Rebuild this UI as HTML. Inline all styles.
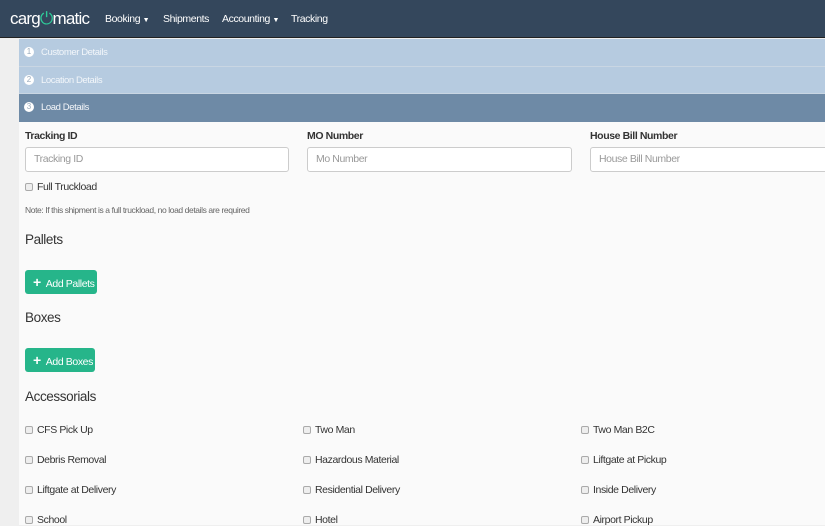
<!DOCTYPE html>
<html><head><style>
*{margin:0;padding:0;box-sizing:border-box}
body{width:825px;height:525px;overflow:hidden;background:#efefef;font-family:"Liberation Sans",sans-serif;font-size:11px;color:#333;letter-spacing:-0.4px;position:relative}
.nav{position:absolute;left:0;top:0;width:825px;height:38px;background:#34475c;border-bottom:1px solid #222;color:#fff}
.logo{position:absolute;left:10px;top:9px;font-size:17px;letter-spacing:-0.8px;color:#fff}
.nav .it{position:absolute;top:13px;font-size:10.5px}
.car{font-size:7px}
.main{position:absolute;left:19px;top:39px;width:806px;height:486px;background:#fafafa}
.step{height:27.5px;border-bottom:1px solid #c9d6e3;background:#b6cbe0;color:#f2f6fa;font-size:9.5px;line-height:27px;padding-left:22px;position:relative}
.step.a{background:#6e8aa6;color:#f4f6f9;border-bottom:none}
.num{position:absolute;left:5px;top:8px;width:10px;height:10px;border-radius:50%;background:#fff;color:#9ab;font-size:8px;line-height:10px;text-align:center;letter-spacing:0}
.abs{position:absolute}
.lbl{font-weight:bold;font-size:10.5px}
.inp{height:25px;border:1px solid #ccc;border-radius:3px;background:#fff;color:#999;padding-left:8px;line-height:23px;font-size:10.5px}
.cb{display:inline-block;width:8px;height:8px;border:1px solid #aaa;border-radius:2px;background:#eee;vertical-align:-1px;margin-right:4px}
h3{font-weight:normal;font-size:13.5px;color:#333}
.btn{background:#26b58a;color:#fff;border-radius:3px;height:24px;line-height:24px;padding-left:8px;font-size:10.5px}
.btn b{font-size:14px;margin-right:5px}
.ac{font-size:10.5px}
</style></head><body>
<div class="nav">
<div class="logo">carg<span style="color:#2ecc9a">&#x23FB;</span>matic</div>
<div class="it" style="left:105px">Booking <span class="car">▼</span></div>
<div class="it" style="left:163px">Shipments</div>
<div class="it" style="left:222px">Accounting <span class="car">▼</span></div>
<div class="it" style="left:291px">Tracking</div>
</div>
<div class="main">
<div class="step"><span class="num">1</span>Customer Details</div>
<div class="step"><span class="num">2</span>Location Details</div>
<div class="step a"><span class="num">3</span>Load Details</div>
</div>
<div class="abs lbl" style="left:25px;top:130px">Tracking ID</div>
<div class="abs lbl" style="left:307px;top:130px">MO Number</div>
<div class="abs lbl" style="left:590px;top:130px">House Bill Number</div>
<div class="abs inp" style="left:25px;top:147px;width:264px">Tracking ID</div>
<div class="abs inp" style="left:307px;top:147px;width:265px">Mo Number</div>
<div class="abs inp" style="left:590px;top:147px;width:240px">House Bill Number</div>
<div class="abs ac" style="left:25px;top:181px"><span class="cb"></span>Full Truckload</div>
<div class="abs" style="left:25px;top:205px;font-size:8.5px;color:#666">Note: If this shipment is a full truckload, no load details are required</div>
<h3 class="abs" style="left:25px;top:232px">Pallets</h3>
<div class="abs btn" style="left:25px;top:270px;width:72px"><b>+</b>Add Pallets</div>
<h3 class="abs" style="left:25px;top:310px">Boxes</h3>
<div class="abs btn" style="left:25px;top:348px;width:70px"><b>+</b>Add Boxes</div>
<h3 class="abs" style="left:25px;top:389px">Accessorials</h3>
<div class="abs ac" style="left:25px;top:424px"><span class="cb"></span>CFS Pick Up</div>
<div class="abs ac" style="left:303px;top:424px"><span class="cb"></span>Two Man</div>
<div class="abs ac" style="left:581px;top:424px"><span class="cb"></span>Two Man B2C</div>
<div class="abs ac" style="left:25px;top:454px"><span class="cb"></span>Debris Removal</div>
<div class="abs ac" style="left:303px;top:454px"><span class="cb"></span>Hazardous Material</div>
<div class="abs ac" style="left:581px;top:454px"><span class="cb"></span>Liftgate at Pickup</div>
<div class="abs ac" style="left:25px;top:484px"><span class="cb"></span>Liftgate at Delivery</div>
<div class="abs ac" style="left:303px;top:484px"><span class="cb"></span>Residential Delivery</div>
<div class="abs ac" style="left:581px;top:484px"><span class="cb"></span>Inside Delivery</div>
<div class="abs ac" style="left:25px;top:514px"><span class="cb"></span>School</div>
<div class="abs ac" style="left:303px;top:514px"><span class="cb"></span>Hotel</div>
<div class="abs ac" style="left:581px;top:514px"><span class="cb"></span>Airport Pickup</div>
</body></html>
